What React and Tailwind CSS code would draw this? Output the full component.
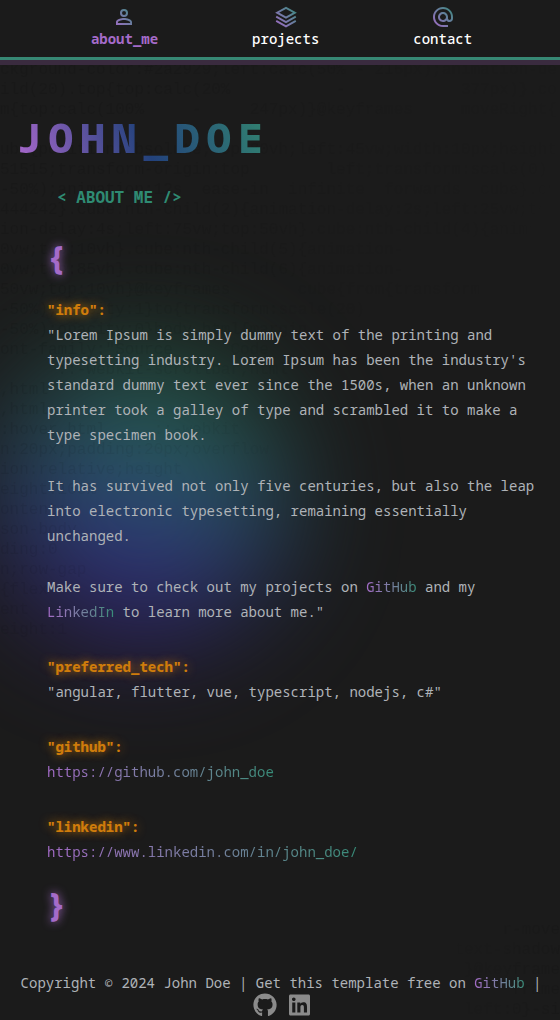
import { FaGithub, FaLinkedin } from "react-icons/fa";

const NAV = [
  {
    label: "about_me",
    active: true,
    fill: "M12,4A4,4 0 0,1 16,8A4,4 0 0,1 12,12A4,4 0 0,1 8,8A4,4 0 0,1 12,4M12,6A2,2 0 0,0 10,8A2,2 0 0,0 12,10A2,2 0 0,0 14,8A2,2 0 0,0 12,6M12,13C14.67,13 20,14.33 20,17V20H4V17C4,14.33 9.33,13 12,13M12,14.9C9.03,14.9 5.9,16.36 5.9,17V18.1H18.1V17C18.1,16.36 14.97,14.9 12,14.9Z",
  },
  {
    label: "projects",
    stroke:
      "M12 2.8l8.9 4.9L12 12.6 3.1 7.7zM2.2 11.7L12 17.1l9.8-5.4M2.2 15.9L12 21.3l9.8-5.4",
  },
  {
    label: "contact",
    fill: "M12,15C12.81,15 13.5,14.7 14.11,14.11C14.7,13.5 15,12.81 15,12C15,11.19 14.7,10.5 14.11,9.89C13.5,9.3 12.81,9 12,9C11.19,9 10.5,9.3 9.89,9.89C9.3,10.5 9,11.19 9,12C9,12.81 9.3,13.5 9.89,14.11C10.5,14.7 11.19,15 12,15M12,2C14.75,2 17.1,3 19.05,4.95C21,6.9 22,9.25 22,12V13.45C22,14.45 21.65,15.3 21,16C20.3,16.67 19.5,17 18.5,17C17.3,17 16.31,16.5 15.56,15.5C14.56,16.5 13.38,17 12,17C10.63,17 9.45,16.5 8.46,15.54C7.5,14.55 7,13.38 7,12C7,10.63 7.5,9.45 8.46,8.46C9.45,7.5 10.63,7 12,7C13.38,7 14.55,7.5 15.54,8.46C16.5,9.45 17,10.63 17,12V13.45C17,13.86 17.16,14.22 17.46,14.53C17.76,14.84 18.11,15 18.5,15C18.92,15 19.27,14.84 19.57,14.53C19.87,14.22 20,13.86 20,13.45V12C20,9.81 19.23,7.93 17.65,6.35C16.07,4.77 14.19,4 12,4C9.81,4 7.93,4.77 6.35,6.35C4.77,7.93 4,9.81 4,12C4,14.19 4.77,16.07 6.35,17.65C7.93,19.23 9.81,20 12,20H17V22H12C9.25,22 6.9,21 4.95,19.05C3,17.1 2,14.75 2,12C2,9.25 3,6.9 4.95,4.95C6.9,3 9.25,2 12,2Z",
  },
];

const CODE = `ckground-color:#2a2929;left:calc(50% - 216px);animation-de
ild(20).top{top:calc(20%           -            377px)}.co
m{top:calc(100%     -     247px)}@keyframes     moveRight{

ube{position:absolute;top:80vh;left:45vw;width:10px;height
51515;transform-origin:top        left;transform:scale(0)
-50%);animation:12s  ease-in  infinite  forwards  cube}.cu
444242}.cube:nth-child(2){animation-delay:2s;left:25vw;top
ion-delay:4s;left:75vw;top:50vh}.cube:nth-child(4){animati
0vw;top:10vh}.cube:nth-child(5){animation-
0vw;top:85vh}.cube:nth-child(6){animation-
50vw;top:10vh}@keyframes       cube{from{transform
-50%);opacity:1}to{transform:scale(20)
-50%);opacity:0}body,html{margin
ont-family:"Source      Code
      ::-webkit-scrollbar,html
,html
,html
:hover,html     ::-webkit
n:20px;padding:20px;overflow
ion:relative;height
eight:100%
ontent:
son-body
ding:0
n;row-gap
{flex
ent
eight:1`;

const CODE_END = `r-move
text-shadow
}@keyframe
frame
left:0}-si`;

function NavIcon({ item }) {
  const id = `nav-${item.label}`;
  return (
    <svg viewBox="0 0 24 24" className="size-6" aria-hidden="true">
      <defs>
        <linearGradient id={id} gradientUnits="userSpaceOnUse" x1="2" y1="22" x2="22" y2="2">
          <stop offset="0" stopColor="#a36ac7" />
          <stop offset="1" stopColor="#388c7d" />
        </linearGradient>
      </defs>
      {item.fill ? (
        <path d={item.fill} fill={`url(#${id})`} />
      ) : (
        <path d={item.stroke} fill="none" stroke={`url(#${id})`} strokeWidth="1.9" />
      )}
    </svg>
  );
}

function GradientLink({ children, href }) {
  return (
    <a href={href} className="bg-linear-to-r from-[#a36ac7] to-[#368c78] bg-clip-text text-transparent">
      {children}
    </a>
  );
}

function Entry({ name, children }) {
  return (
    <div>
      <dt className="font-extrabold text-[#cf7c0b] [text-shadow:0_0_10px_#cf7c0b]">{`"${name}":`}</dt>
      <dd>{children}</dd>
    </div>
  );
}

function Brace({ children }) {
  return (
    <p className="text-[32px] leading-[40px] font-extrabold text-[#a56bc9] [text-shadow:0_0_10px_#a56bc9]">
      {children}
    </p>
  );
}

export default function App() {
  return (
    <div className="relative min-h-screen overflow-hidden bg-[#1b1b1b] font-['Noto_Sans_Mono','Liberation_Mono',monospace] text-[14px] text-[#afb3b8]">
      <div aria-hidden="true" className="absolute inset-0 overflow-hidden">
        <div className="absolute top-[355px] left-0 size-[285px] rounded-full bg-[linear-gradient(195deg,#24603f_12%,#2a6070_42%,#2d3f80_60%,#35207a_82%)] opacity-90 blur-[58px]" />
        <pre className="absolute top-[60px] left-0 font-['Liberation_Mono',monospace] text-[16px] leading-[20px] text-black/8 [mask-image:linear-gradient(115deg,black_20%,transparent_75%)]">
          {CODE}
        </pre>
        <pre className="absolute right-0 bottom-0 text-right font-['Liberation_Mono',monospace] text-[16px] leading-[20px] text-black/8 [mask-image:linear-gradient(to_left,black,transparent)]">
          {CODE_END}
        </pre>
      </div>

      <header className="relative border-b-3 border-[#378874] bg-[#1b1b1b] pt-[5px] pb-[9px] shadow-[0_5px_0_#3a2b3f]">
        <nav className="flex justify-center gap-[94px] pl-[3px]">
          {NAV.map((item) => (
            <a
              key={item.label}
              href={`#${item.label}`}
              className={
                item.active
                  ? "flex flex-col items-center leading-[19px] font-bold text-[#a56bc9]"
                  : "flex flex-col items-center leading-[19px] font-medium text-white"
              }
            >
              <NavIcon item={item} />
              {item.label}
            </a>
          ))}
        </nav>
      </header>

      <main className="relative px-[17px] pt-[53px]">
        <h1 className="w-fit bg-[linear-gradient(70deg,#a868cc,#23427c_50%,#32856f)] bg-clip-text text-[41px] leading-[48px] font-extrabold tracking-[7px] text-transparent">
          JOHN_DOE
        </h1>
        <h2 className="mt-6 ml-[40px] text-[16px] leading-[24px] font-bold text-[#2f8b73]">
          {"< ABOUT ME />"}
        </h2>
        <div className="mt-[28px] ml-[30px] leading-[25px]">
          <Brace>{"{"}</Brace>
          <dl className="mt-[20px] flex flex-col gap-[30px]">
            <Entry name="info">
              <div className="flex flex-col gap-[26px]">
                <p>
                  "Lorem Ipsum is simply dummy text of the printing and typesetting industry. Lorem
                  Ipsum has been the industry's standard dummy text ever since the 1500s, when an
                  unknown printer took a galley of type and scrambled it to make a type specimen
                  book.
                </p>
                <p>
                  It has survived not only five centuries, but also the leap into electronic
                  typesetting, remaining essentially unchanged.
                </p>
                <p>
                  Make sure to check out my projects on <GradientLink href="#github">GitHub</GradientLink> and
                  my <GradientLink href="#linkedin">LinkedIn</GradientLink> to learn more about me."
                </p>
              </div>
            </Entry>
            <Entry name="preferred_tech">"angular, flutter, vue, typescript, nodejs, c#"</Entry>
            <Entry name="github">
              <GradientLink href="https://github.com/john_doe">https://github.com/john_doe</GradientLink>
            </Entry>
            <Entry name="linkedin">
              <GradientLink href="https://www.linkedin.com/in/john_doe/">
                https://www.linkedin.com/in/john_doe/
              </GradientLink>
            </Entry>
          </dl>
          <div className="mt-[20px]">
            <Brace>{"}"}</Brace>
          </div>
        </div>
      </main>

      <footer className="relative mt-[49px] pb-[2px] pl-[2px] text-center leading-[20px]">
        <p>
          Copyright © 2024 John Doe | Get this template free on <GradientLink href="#template">GitHub</GradientLink> |
        </p>
        <div className="flex justify-center gap-3 text-[#8b8b8b]">
          <a href="https://github.com/john_doe" aria-label="GitHub">
            <FaGithub className="size-6" />
          </a>
          <a href="https://www.linkedin.com/in/john_doe/" aria-label="LinkedIn">
            <FaLinkedin className="h-6 w-[21px]" />
          </a>
        </div>
      </footer>
    </div>
  );
}
